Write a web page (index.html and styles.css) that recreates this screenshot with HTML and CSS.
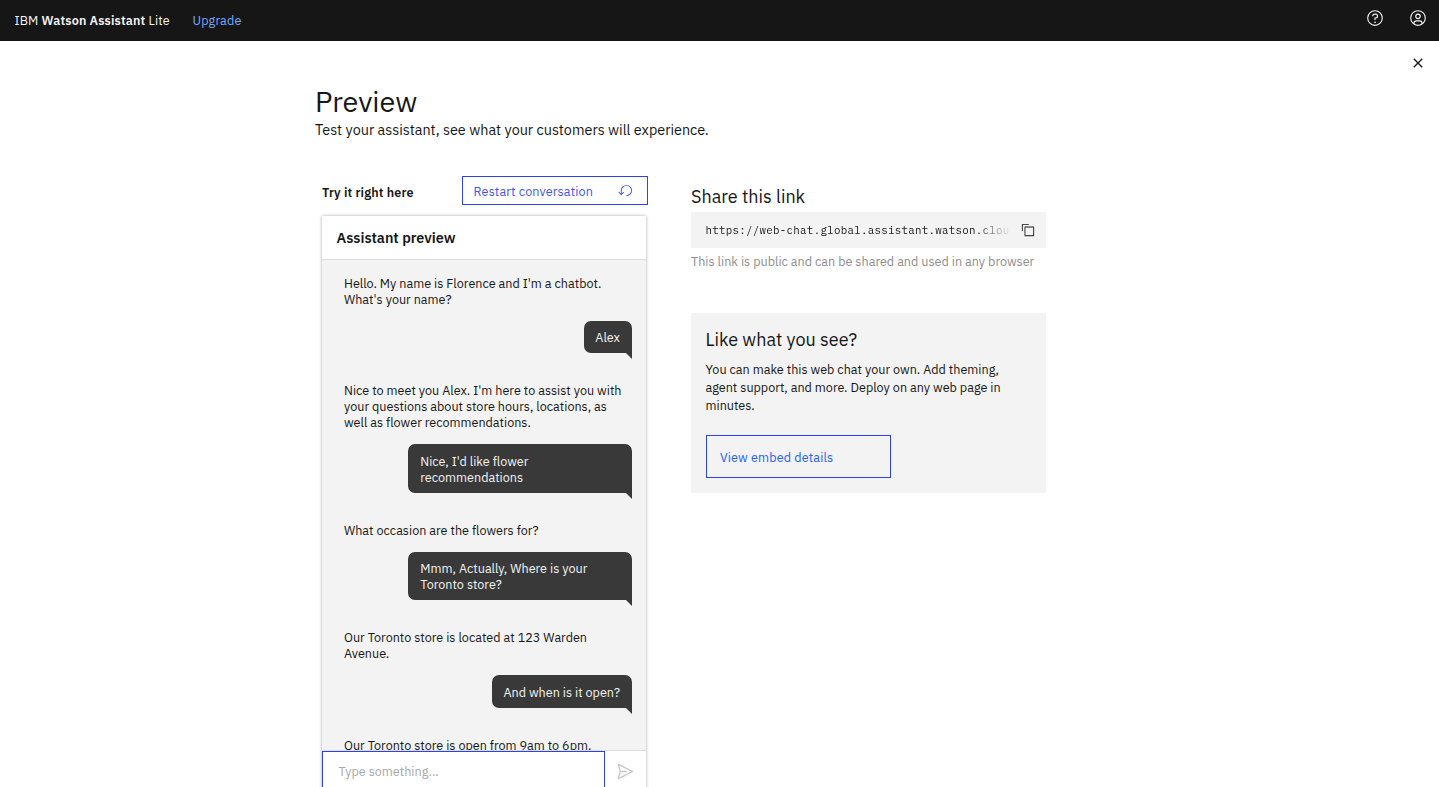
FILE: index.html
```html
<!DOCTYPE html>
<html lang="en">
<head>
<meta charset="utf-8">
<title>Watson Assistant - Preview</title>
<link rel="stylesheet" href="styles.css">
</head>
<body>
<header class="topbar">
  <div class="brand">IBM <b>Watson Assistant</b> Lite</div>
  <a class="upgrade">Upgrade</a>
  <div class="topbar-icons">
    <svg width="18" height="18" viewBox="0 0 32 32" fill="currentColor"><path d="M16 2a14 14 0 1 0 14 14A14 14 0 0 0 16 2Zm0 26a12 12 0 1 1 12-12 12 12 0 0 1-12 12Z"/><circle cx="16" cy="23.5" r="1.5"/><path d="M17 8h-1.5A4.49 4.49 0 0 0 11 12.500V13h2v-.5A2.500 2.500 0 0 1 15.500 10H17a2.500 2.500 0 0 1 0 5h-2v4.500h2V17a4.500 4.500 0 0 0 0-9Z"/></svg>
    <svg width="18" height="18" viewBox="0 0 32 32" fill="currentColor"><path d="M16 8a5 5 0 1 0 5 5 5 5 0 0 0-5-5Zm0 8a3 3 0 1 1 3-3 3 3 0 0 1-3 3Z"/><path d="M16 2a14 14 0 1 0 14 14A14 14 0 0 0 16 2Zm-6 24.400V25a3 3 0 0 1 3-3h6a3 3 0 0 1 3 3v1.400a11.900 11.900 0 0 1-12 0Zm14-1.500A5 5 0 0 0 19 20h-6a5 5 0 0 0-5 4.900 12 12 0 1 1 16 0Z"/></svg>
  </div>
</header>
<main class="page">
  <div class="close-row">
    <svg class="close" width="18" height="18" viewBox="0 0 32 32"><path d="M24 9.400 22.600 8 16 14.600 9.400 8 8 9.400 14.600 16 8 22.600 9.400 24 16 17.400 22.600 24 24 22.600 17.400 16 24 9.400Z"/></svg>
  </div>
  <h1 class="title">Preview</h1>
  <p class="subtitle">Test your assistant, see what your customers will experience.</p>
  <div class="columns">
    <section class="try">
      <div class="try-head">
        <h2 class="try-title">Try it right here</h2>
        <button class="restart"><span>Restart conversation</span>
          <svg width="15" height="15" viewBox="0 0 32 32" fill="currentColor"><path d="M18 28A12 12 0 1 0 6 16v6.200L2.400 18.600 1 20l6 6 6-6-1.400-1.400L8 22.200V16a10 10 0 1 1 10 10Z"/></svg>
        </button>
      </div>
      <div class="chat">
        <div class="chat-head">Assistant preview</div>
        <div class="log">
          <p class="bot">Hello. My name is Florence and I'm a chatbot.<br>What's your name?</p>
          <p class="user">Alex</p>
          <p class="bot">Nice to meet you Alex. I'm here to assist you with<br>your questions about store hours, locations, as<br>well as flower recommendations.</p>
          <p class="user wide">Nice, I'd like flower<br>recommendations</p>
          <p class="bot">What occasion are the flowers for?</p>
          <p class="user wide">Mmm, Actually, Where is your<br>Toronto store?</p>
          <p class="bot">Our Toronto store is located at 123 Warden<br>Avenue.</p>
          <p class="user">And when is it open?</p>
          <p class="bot">Our Toronto store is open from 9am to 6pm.</p>
        </div>
        <div class="composer">
          <div class="field">Type something...</div>
          <div class="send"><svg width="21" height="21" viewBox="0 0 32 32" fill="currentColor"><path d="M27.450 15.110l-22-11a1 1 0 0 0-1.080.120 1 1 0 0 0-.33 1L7 16 4 26.740A1 1 0 0 0 5 28a1 1 0 0 0 .450-.11l22-11a1 1 0 0 0 0-1.780Zm-20.900 10L8.760 17H18v-2H8.760L6.550 6.890 24.760 16Z"/></svg></div>
        </div>
      </div>
    </section>
    <section class="share">
      <h2 class="heading">Share this link</h2>
      <div class="link-box">
        <code class="url">https://web-chat.global.assistant.watson.clou</code>
        <svg width="14" height="14" viewBox="0 0 32 32" fill="currentColor"><path d="M28 10v18H10V10h18m0-2H10a2 2 0 0 0-2 2v18a2 2 0 0 0 2 2h18a2 2 0 0 0 2-2V10a2 2 0 0 0-2-2Z"/><path d="M4 18H2V4a2 2 0 0 1 2-2h14v2H4Z"/></svg>
      </div>
      <p class="hint">This link is public and can be shared and used in any browser</p>
      <div class="card">
        <h2 class="heading">Like what you see?</h2>
        <p class="card-text">You can make this web chat your own. Add theming,<br>agent support, and more. Deploy on any web page in<br>minutes.</p>
        <button class="embed">View embed details</button>
      </div>
    </section>
  </div>
</main>
</body>
</html>
```
FILE: styles.css
```css
* { box-sizing: border-box; margin: 0; padding: 0; }
body {
  height: 787px; overflow: hidden; background: #fff; color: #161616;
  font: 12.6px/16px "IBM Plex Sans", Roboto, sans-serif;
  white-space: nowrap;
}
svg { display: block; flex: none; }
button { font: inherit; background: none; border: 1px solid #2c42f2; text-align: left; letter-spacing: 0.14px; }
.topbar {
  display: flex; align-items: center; height: 41px; padding: 0 12px 1.4px 14.5px;
  background: #161616; color: #f4f4f4; letter-spacing: 0.14px;
}
.brand { width: 178px; }
.brand b { font-weight: 600; }
.upgrade { color: #78a9ff; }
.topbar-icons { display: flex; gap: 25px; margin: 0 0 3.6px auto; }
.page { height: 746px; overflow: hidden; }
.close-row { display: flex; justify-content: flex-end; height: 40px; padding: 13px 12px 0 0; }
.close { fill: #161616; stroke: #161616; stroke-width: 0.6; }
.title { margin-left: 315px; font-size: 28.8px; font-weight: 400; line-height: 40px; }
.subtitle { margin-left: 315px; font-size: 14.4px; line-height: 18px; }
.columns { display: flex; gap: 43px; margin: 37px 0 0 322px; }
.try { width: 326px; }
.try-head { display: flex; justify-content: space-between; height: 29px; }
.try-title { padding-top: 8px; font-size: 12.6px; line-height: 16px; font-weight: 600; letter-spacing: 0.14px; }
.restart {
  display: flex; align-items: center; justify-content: space-between;
  width: 186px; height: 29px; padding: 0 14px 0 10.6px; color: #3f54f5;
}
.restart span { padding-top: 1px; }
.chat {
  display: flex; flex-direction: column; width: 324px; height: 581px; margin-top: 11px;
  box-shadow: 0 0 3px rgba(0, 0, 0, 0.36);
}
.chat-head {
  height: 44px; padding-left: 14.5px; border-bottom: 1px solid #dcdcdc; background: #fff;
  font-size: 14.4px; line-height: 44px; font-weight: 600;
}
.log {
  display: flex; flex-direction: column; height: 490px; flex: none; padding: 14.8px 14px 0 22px;
  overflow: hidden; background: #f3f3f3;
}
.bot { flex: none; margin-bottom: 14px; }
.user {
  position: relative; flex: none; align-self: flex-end; margin-bottom: 29px; padding: 8.2px 12px 8.2px 11.3px;
  border-radius: 7px 7px 0 7px; background: #393939; color: #f4f4f4;
}
.user.wide { width: 224px; padding: 8.6px 12px 8px 12.3px; }
.user::after {
  content: ""; position: absolute; right: 0; top: 100%;
  border-top: 6px solid #393939; border-left: 6px solid transparent;
}
.composer { display: flex; flex: none; height: 50px; border-top: 1px solid #dcdcdc; background: #fff; }
.field { flex: none; width: 283px; padding: 11px 15.5px; border: 1px solid #2c42f2; color: #a8a8a8; }
.send { padding: 9.5px 0 0 10px; color: #c6c6c6; }
.share { width: 355px; padding-top: 9px; }
.heading { font-size: 18px; line-height: 24px; font-weight: 400; }
.link-box {
  display: flex; align-items: center; justify-content: space-between; height: 36px; margin-top: 3px;
  padding: 0 11px 0 14.5px; background: #f3f3f3;
}
.url {
  font: 10.8px/16px "IBM Plex Mono", "Liberation Mono", monospace; letter-spacing: 0.28px;
  color: transparent; background: linear-gradient(90deg, #161616 88%, #e8e8e8 100%);
  -webkit-background-clip: text; background-clip: text;
}
.hint { margin-top: 5px; color: #8d8d8d; }
.card { height: 180px; margin-top: 44px; padding: 15px 14.5px; background: #f3f3f3; }
.card-text { margin-top: 8px; line-height: 18px; }
.embed { display: block; width: 185px; height: 43px; margin-top: 21px; padding-left: 13.5px; color: #2560f5; }
```
